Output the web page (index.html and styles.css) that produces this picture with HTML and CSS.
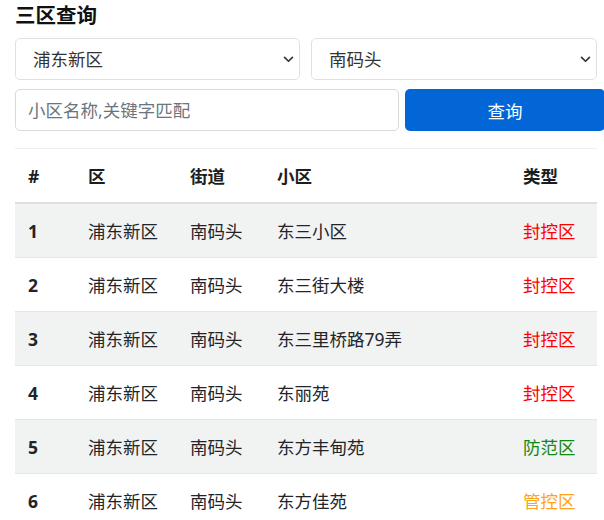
FILE: index.html
```html
<!DOCTYPE html>
<html lang="zh-CN">
<head>
<meta charset="utf-8">
<title>三区查询</title>
<link rel="stylesheet" href="styles.css">
</head>
<body>
<div class="page">
  <h1 class="title">三区查询</h1>
  <div class="selects">
    <select class="field select"><option>浦东新区</option></select>
    <select class="field select"><option>南码头</option></select>
  </div>
  <div class="search">
    <input class="field input" type="text" placeholder="小区名称,关键字匹配">
    <button class="btn">查询</button>
  </div>
  <table class="table">
    <colgroup>
      <col class="c1"><col class="c2"><col class="c3"><col class="c4"><col class="c5">
    </colgroup>
    <thead>
      <tr><th>#</th><th>区</th><th>街道</th><th>小区</th><th>类型</th></tr>
    </thead>
    <tbody>
      <tr><th>1</th><td>浦东新区</td><td>南码头</td><td>东三小区</td><td class="red">封控区</td></tr>
      <tr><th>2</th><td>浦东新区</td><td>南码头</td><td>东三街大楼</td><td class="red">封控区</td></tr>
      <tr><th>3</th><td>浦东新区</td><td>南码头</td><td>东三里桥路79弄</td><td class="red">封控区</td></tr>
      <tr><th>4</th><td>浦东新区</td><td>南码头</td><td>东丽苑</td><td class="red">封控区</td></tr>
      <tr><th>5</th><td>浦东新区</td><td>南码头</td><td>东方丰甸苑</td><td class="green">防范区</td></tr>
      <tr><th>6</th><td>浦东新区</td><td>南码头</td><td>东方佳苑</td><td class="orange">管控区</td></tr>
    </tbody>
  </table>
</div>
</body>
</html>
```
FILE: styles.css
```css
html, body {
  margin: 0;
  padding: 0;
  overflow: hidden;
  background: #fff;
}
body {
  font-family: "Noto Sans", "Noto Sans CJK SC", sans-serif;
  color: #212529;
}
.page {
  padding: 3px 7px 0 15px;
}
.title {
  margin: 0;
  font-size: 20.5px;
  line-height: 25px;
  font-weight: 700;
  color: #111;
}
.selects {
  margin-top: 10px;
  display: grid;
  grid-template-columns: 285px 286px;
  gap: 11px;
}
.field {
  box-sizing: border-box;
  height: 42px;
  border: 1px solid #dee2e6;
  border-radius: 5px;
  background-color: #fff;
  font-family: inherit;
  font-size: 17.5px;
  color: #333;
  margin: 0;
}
.select {
  appearance: none;
  -webkit-appearance: none;
  padding: 0 30px 0 17px;
  background-image: url("data:image/svg+xml,%3Csvg xmlns='http://www.w3.org/2000/svg' viewBox='0 0 12 8'%3E%3Cpath fill='none' stroke='%23343a40' stroke-linecap='round' stroke-linejoin='round' stroke-width='2' d='M1.5 1.5l4.5 4.5 4.5-4.5'/%3E%3C/svg%3E");
  background-repeat: no-repeat;
  background-position: right 5px center;
  background-size: 11px 7px;
}
.search {
  margin-top: 9px;
  display: grid;
  grid-template-columns: 384px 200px;
  gap: 6px;
}
.input {
  width: 100%;
  padding: 0 12px;
  border-color: #d7dbe0;
}
.input::placeholder {
  color: #6c757d;
}
.btn {
  height: 42px;
  border: 0;
  border-radius: 5px;
  background: #0366d6;
  color: #fff;
  font-family: inherit;
  font-size: 17.5px;
  padding: 0;
}
.table {
  margin-top: 17px;
  width: 582px;
  border-collapse: collapse;
  table-layout: fixed;
  border-top: 1px solid #eceef0;
}
.c1 { width: 60px; }
.c2 { width: 102px; }
.c3 { width: 87px; }
.c4 { width: 246px; }
.c5 { width: 87px; }
.table th, .table td {
  text-align: left;
  padding: 0 0 0 13px;
  height: 53px;
  font-size: 17.5px;
  line-height: 24px;
  vertical-align: middle;
  border-bottom: 1px solid #e4e6e8;
}
.table thead th {
  border-bottom: 2px solid #dde0e3;
  font-weight: 700;
  color: #1b1e21;
}
.table tbody th {
  font-weight: 700;
}
.table tbody tr:nth-child(odd) {
  background: #f1f2f2;
}
.red { color: #ff0000; }
.green { color: #118811; }
.orange { color: #ffa31a; }
```
